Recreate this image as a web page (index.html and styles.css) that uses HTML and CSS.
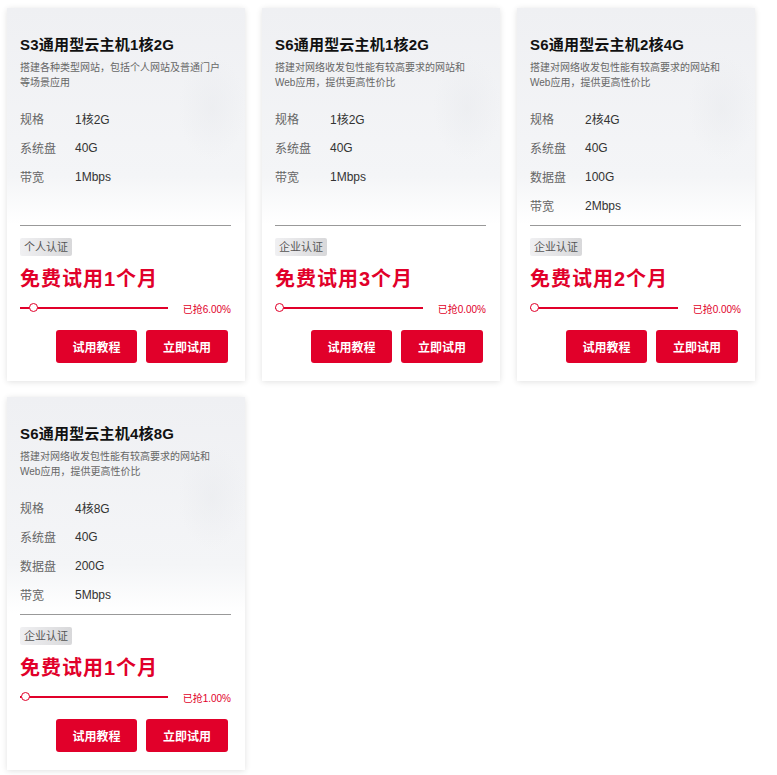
FILE: index.html
```html
<!DOCTYPE html>
<html lang="zh-CN">

<head>
    <meta charset="UTF-8" />
    <meta name="viewport" content="width=device-width, initial-scale=1.0" />
    <title>免费试用</title>
    <link rel="stylesheet" href="styles.css">
</head>

<body>
    <div class="grid">
        <div class="card">
            <h3 class="title">S3通用型云主机1核2G</h3>
            <p class="desc">搭建各种类型网站，包括个人网站及普通门户等场景应用</p>
            <ul class="specs">
                <li><span class="label">规格</span><span class="value">1核2G</span></li>
                <li><span class="label">系统盘</span><span class="value">40G</span></li>
                <li><span class="label">带宽</span><span class="value">1Mbps</span></li>
            </ul>
            <span class="badge">个人认证</span>
            <div class="offer">免费试用1个月</div>
            <div class="progress">
                <div class="track"><span class="knob" style="left: 6%"></span></div>
                <span class="rate">已抢6.00%</span>
            </div>
            <div class="actions">
                <a class="btn" href="#">试用教程</a>
                <a class="btn" href="#">立即试用</a>
            </div>
        </div>

        <div class="card">
            <h3 class="title">S6通用型云主机1核2G</h3>
            <p class="desc">搭建对网络收发包性能有较高要求的网站和Web应用，提供更高性价比</p>
            <ul class="specs">
                <li><span class="label">规格</span><span class="value">1核2G</span></li>
                <li><span class="label">系统盘</span><span class="value">40G</span></li>
                <li><span class="label">带宽</span><span class="value">1Mbps</span></li>
            </ul>
            <span class="badge">企业认证</span>
            <div class="offer">免费试用3个月</div>
            <div class="progress">
                <div class="track"><span class="knob" style="left: 0%"></span></div>
                <span class="rate">已抢0.00%</span>
            </div>
            <div class="actions">
                <a class="btn" href="#">试用教程</a>
                <a class="btn" href="#">立即试用</a>
            </div>
        </div>

        <div class="card">
            <h3 class="title">S6通用型云主机2核4G</h3>
            <p class="desc">搭建对网络收发包性能有较高要求的网站和Web应用，提供更高性价比</p>
            <ul class="specs">
                <li><span class="label">规格</span><span class="value">2核4G</span></li>
                <li><span class="label">系统盘</span><span class="value">40G</span></li>
                <li><span class="label">数据盘</span><span class="value">100G</span></li>
                <li><span class="label">带宽</span><span class="value">2Mbps</span></li>
            </ul>
            <span class="badge">企业认证</span>
            <div class="offer">免费试用2个月</div>
            <div class="progress">
                <div class="track"><span class="knob" style="left: 0%"></span></div>
                <span class="rate">已抢0.00%</span>
            </div>
            <div class="actions">
                <a class="btn" href="#">试用教程</a>
                <a class="btn" href="#">立即试用</a>
            </div>
        </div>

        <div class="card">
            <h3 class="title">S6通用型云主机4核8G</h3>
            <p class="desc">搭建对网络收发包性能有较高要求的网站和Web应用，提供更高性价比</p>
            <ul class="specs">
                <li><span class="label">规格</span><span class="value">4核8G</span></li>
                <li><span class="label">系统盘</span><span class="value">40G</span></li>
                <li><span class="label">数据盘</span><span class="value">200G</span></li>
                <li><span class="label">带宽</span><span class="value">5Mbps</span></li>
            </ul>
            <span class="badge">企业认证</span>
            <div class="offer">免费试用1个月</div>
            <div class="progress">
                <div class="track"><span class="knob" style="left: 1%"></span></div>
                <span class="rate">已抢1.00%</span>
            </div>
            <div class="actions">
                <a class="btn" href="#">试用教程</a>
                <a class="btn" href="#">立即试用</a>
            </div>
        </div>
    </div>
</body>

</html>
```

FILE: styles.css
```css
* {
    box-sizing: border-box;
    margin: 0;
    padding: 0;
}

body {
    font-family: "Liberation Sans", Arial, "Noto Sans CJK SC", sans-serif;
    background: #fff;
    color: #333;
}

.grid {
    display: grid;
    grid-template-columns: repeat(3, 238px);
    column-gap: 17px;
    row-gap: 16px;
    padding: 8px 7px;
}

.card {
    display: flex;
    flex-direction: column;
    align-items: flex-start;
    padding: 27px 14px 18px 13px;
    background:
        radial-gradient(ellipse 45px 70px at 205px 100px, rgba(228, 230, 234, 0.35), rgba(255, 255, 255, 0) 75%),
        linear-gradient(180deg, #eff0f3 0%, #f4f5f7 45%, #fff 58%, #fff 100%);
    box-shadow: 0 1px 6px rgba(0, 0, 0, 0.12);
}

.title {
    font-size: 15px;
    line-height: 20px;
    font-weight: 700;
    letter-spacing: 0.2px;
    color: #111;
}

.desc {
    max-width: 206px;
    margin-top: 5px;
    font-size: 10px;
    line-height: 15px;
    color: #666;
}

.specs {
    list-style: none;
    width: 100%;
    height: 122px;
    margin-top: 14px;
    border-bottom: 1px solid #999;
}

.specs li {
    display: flex;
    height: 29px;
    align-items: center;
    font-size: 12px;
}

.label {
    width: 55px;
    color: #666;
}

.value {
    color: #333;
}

.badge {
    margin-top: 12px;
    padding: 0 4px;
    height: 18px;
    line-height: 18px;
    font-size: 11px;
    color: #555;
    border-radius: 2px;
    background: linear-gradient(90deg, #f0f0f2 0%, #e2e2e4 60%, #d8d8da 100%);
}

.offer {
    margin-top: 9px;
    font-size: 20px;
    line-height: 28px;
    font-weight: 700;
    letter-spacing: 1px;
    color: #e1002a;
}

.progress {
    display: flex;
    align-items: center;
    justify-content: space-between;
    width: 100%;
    height: 12px;
    margin-top: 9px;
}

.track {
    position: relative;
    width: 148px;
    height: 2px;
    background: #e1002a;
}

.knob {
    position: absolute;
    top: -4px;
    width: 9px;
    height: 9px;
    border: 1.5px solid #e1002a;
    border-radius: 50%;
    background: #fff;
}

.rate {
    font-size: 10px;
    color: #e1002a;
}

.actions {
    display: flex;
    gap: 9px;
    align-self: flex-end;
    margin-top: 16px;
    margin-right: 3px;
}

.btn {
    display: flex;
    align-items: center;
    justify-content: center;
    width: 81px;
    height: 33px;
    border-radius: 3px;
    background: #e1002a;
    color: #fff;
    font-size: 12px;
    font-weight: 700;
    text-decoration: none;
}

.btn + .btn {
    width: 82px;
}
```
